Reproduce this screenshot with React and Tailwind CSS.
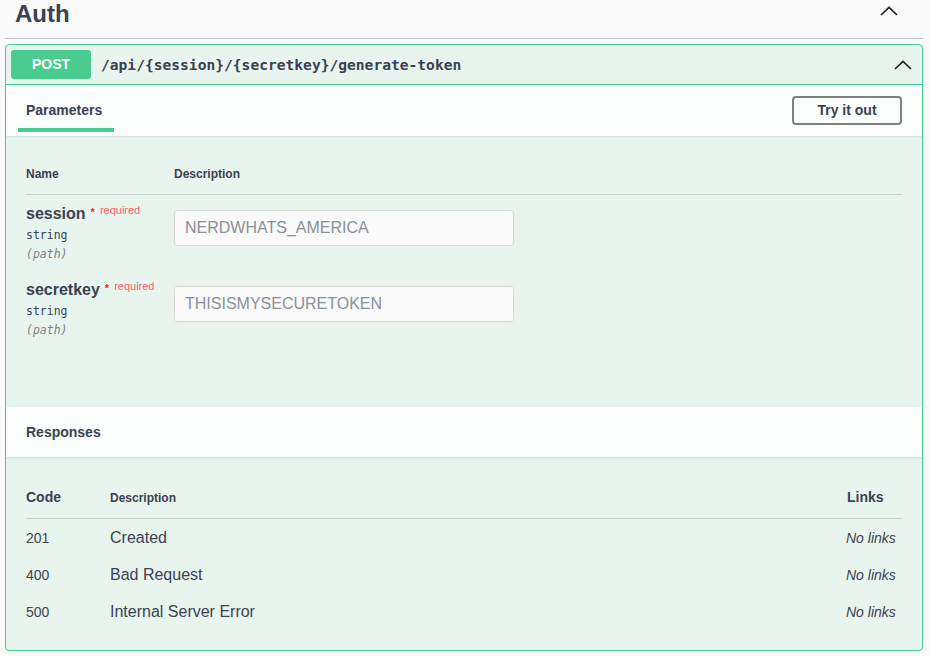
import React from 'react';

const Chevron = ({ className }) => (
  <svg viewBox="0 0 18 10" width="18" height="10" className={className}>
    <polyline points="1,9 9,1.5 17,9" fill="none" stroke="#1f1f1f" strokeWidth="1.7" />
  </svg>
);

const params = [
  { name: 'session', type: 'string', value: 'NERDWHATS_AMERICA' },
  { name: 'secretkey', type: 'string', value: 'THISISMYSECURETOKEN' },
];

const responses = [
  { code: '201', desc: 'Created' },
  { code: '400', desc: 'Bad Request' },
  { code: '500', desc: 'Internal Server Error' },
];

const mono = "font-['DejaVu_Sans_Mono',monospace]";

const App = () => {
  return (
    <div className="min-h-screen bg-[#fafafa] pl-[5px] pr-[6px] font-['Liberation_Sans',Arial,sans-serif] text-[#3b4151]">
      {/* tag header */}
      <div className="h-[39px] border-b border-[#c1c3c7] flex items-start justify-between pl-[10px] pr-[25px]">
        <h2 className="text-[24px] font-bold leading-6 pt-[2px]">Auth</h2>
        <Chevron className="mt-[6px]" />
      </div>

      {/* opblock */}
      <div className="mt-[5px] border border-[#49cc90] rounded-[4px] bg-[#e8f5ef]">
        <div className="h-[40px] border-b border-[#49cc90] flex items-center pl-[5px] pr-[10px]">
          <span className="w-[80px] h-[29px] rounded-[3px] bg-[#49cc90] text-white text-[14px] font-bold flex items-center justify-center">
            POST
          </span>
          <span className={`${mono} ml-[10px] text-[14.6px] font-bold flex-1`}>
            /api/{'{session}'}/{'{secretkey}'}/generate-token
          </span>
          <Chevron />
        </div>

        {/* parameters header */}
        <div className="h-[51px] bg-[#fafdfc] shadow-[0_1px_2px_rgba(0,0,0,0.1)] flex items-start justify-between pl-[12px] pr-[20px] relative">
          <div className="w-[96px] pt-[16px] pb-[9px] px-[8px] border-b-4 border-[#49cc90] text-[14px] font-bold leading-[18px]">
            Parameters
          </div>
          <button className="mt-[11px] w-[110px] h-[29px] border-2 border-[#808080] rounded-[4px] text-[14px] font-bold text-[#3b4151] bg-transparent">
            Try it out
          </button>
        </div>

        {/* parameters body */}
        <div className="h-[271px] px-[20px] pt-[31px]">
          <div className="flex text-[12px] font-bold leading-[14px] pb-[13px] border-b border-[#c5d1cf]">
            <div className="w-[148px]">Name</div>
            <div>Description</div>
          </div>
          {params.map((p) => (
            <div key={p.name} className="flex pt-[9px] pb-[7px]">
              <div className="w-[148px] h-[60px]">
                <div className="text-[16px] font-bold leading-[20px] flex items-start">
                  {p.name}
                  <span className="text-[11px] leading-[12px] font-bold text-[#ff1a1a] ml-[5px] mt-[2px]">*</span>
                  <span className="text-[11px] leading-[12px] font-normal text-[#ff5c6c] ml-[5px] mt-[0px]">required</span>
                </div>
                <div className={`${mono} text-[11.5px] leading-[19px] mt-[2px]`}>{p.type}</div>
                <div className={`${mono} text-[11.5px] leading-[19px] italic text-[#808080]`}>(path)</div>
              </div>
              <div className="mt-[6px] w-[340px] h-[36px] border border-[#d9d9d9] rounded-[4px] bg-[#fafafa] pl-[10px] flex items-center text-[16px] text-[#8b8f98]">
                {p.value}
              </div>
            </div>
          ))}
        </div>

        {/* responses header */}
        <div className="h-[50px] bg-[#fafdfc] shadow-[0_1px_2px_rgba(0,0,0,0.1)] flex items-center px-[20px] text-[14px] font-bold relative">
          Responses
        </div>

        {/* responses body */}
        <div className="px-[20px] pt-[32px] pb-[20px]">
          <div className="grid grid-cols-[84px_1fr_55px] items-baseline font-bold pb-[11px] border-b border-[#c5d1cf]">
            <div className="text-[14px] leading-[17px]">Code</div>
            <div className="text-[12px] leading-[17px]">Description</div>
            <div className="text-[14px] leading-[17px]">Links</div>
          </div>
          {responses.map((r) => (
            <div key={r.code} className="grid grid-cols-[84px_1fr_55px] items-baseline pt-[9px] pb-[8px]">
              <div className="text-[14px] leading-[19px]">{r.code}</div>
              <div className="text-[16px] leading-[19px]">{r.desc}</div>
              <div className="text-[14px] leading-[19px] italic -ml-[1px]">No links</div>
            </div>
          ))}
        </div>
      </div>
    </div>
  );
};

export default App;
